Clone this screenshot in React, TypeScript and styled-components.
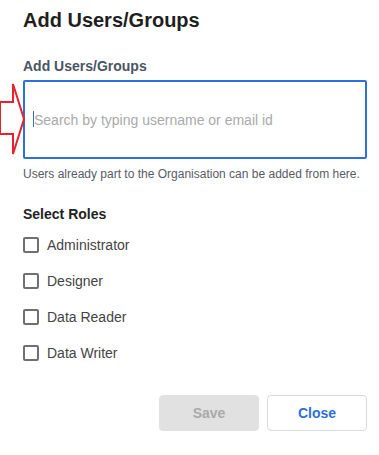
import React from "react";
import styled, { createGlobalStyle } from "styled-components";

const GlobalStyle = createGlobalStyle`
  html, body {
    margin: 0;
    padding: 0;
    background: #ffffff;
  }
  body {
    font-family: "Liberation Sans", Arial, sans-serif;
  }
`;

const Dialog = styled.div`
  width: 379px;
  box-sizing: border-box;
  padding: 8px 12px 0 23px;
  display: flex;
  flex-direction: column;
`;

const Title = styled.h2`
  margin: 0;
  font-size: 20px;
  line-height: 24px;
  font-weight: bold;
  color: #1f1f1f;
`;

const FieldLabel = styled.label`
  margin-top: 24px;
  font-size: 14px;
  line-height: 20px;
  font-weight: bold;
  color: #4a5563;
`;

const InputWrap = styled.div`
  position: relative;
  margin-top: 4px;
`;

const SearchInput = styled.input`
  display: block;
  width: 100%;
  height: 79px;
  box-sizing: border-box;
  border: 2px solid #2f6fdb;
  border-radius: 2px;
  padding: 0 9px;
  font-family: inherit;
  font-size: 14px;
  color: #333;
  caret-color: #2f6fdb;
  outline: none;

  &::placeholder {
    color: #aaaaaa;
  }
`;

const Caret = styled.span`
  position: absolute;
  left: 10px;
  top: 31px;
  width: 1px;
  height: 16px;
  background: #2f6fdb;
  pointer-events: none;
`;

const Pointer = styled.svg`
  position: absolute;
  left: -23px;
  top: 2px;
  pointer-events: none;
`;

const Hint = styled.p`
  margin: 7px 0 0;
  font-size: 12px;
  line-height: 16px;
  color: #555c66;
`;

const SectionTitle = styled.div`
  margin-top: 22px;
  margin-bottom: 3px;
  font-size: 14px;
  line-height: 20px;
  font-weight: bold;
  color: #222;
`;

const RoleRow = styled.label`
  display: flex;
  align-items: center;
  gap: 8px;
  height: 36px;
  font-size: 14px;
  color: #444;
  cursor: pointer;
`;

const Box = styled.span`
  width: 16px;
  height: 16px;
  box-sizing: border-box;
  border: 2px solid #707070;
  border-radius: 2px;
  flex-shrink: 0;
`;

const Actions = styled.div`
  margin-top: 24px;
  display: flex;
  justify-content: flex-end;
  gap: 8px;
`;

const Button = styled.button<{ $variant: "disabled" | "outline" }>`
  width: 100px;
  height: 36px;
  box-sizing: border-box;
  border-radius: 4px;
  font-family: inherit;
  font-size: 14px;
  font-weight: bold;
  cursor: pointer;
  border: 1px solid ${(p) => (p.$variant === "disabled" ? "#e1e1e1" : "#d9d9d9")};
  background: ${(p) => (p.$variant === "disabled" ? "#e1e1e1" : "#ffffff")};
  color: ${(p) => (p.$variant === "disabled" ? "#a9a9a9" : "#2f6fdb")};
`;

const roles = ["Administrator", "Designer", "Data Reader", "Data Writer"];

export default function App() {
  return (
    <>
      <GlobalStyle />
      <Dialog>
        <Title>Add Users/Groups</Title>
        <FieldLabel>Add Users/Groups</FieldLabel>
        <InputWrap>
          <SearchInput placeholder="Search by typing username or email id" />
          <Caret />
          <Pointer width="27" height="74" viewBox="0 0 27 74">
            <polygon
              points="0,20 13,20 13,2 24,37 13,72 13,52 0,52"
              fill="none"
              stroke="#e8212a"
              strokeWidth="2"
              strokeLinejoin="miter"
            />
          </Pointer>
        </InputWrap>
        <Hint>Users already part to the Organisation can be added from here.</Hint>
        <SectionTitle>Select Roles</SectionTitle>
        {roles.map((role) => (
          <RoleRow key={role}>
            <Box />
            {role}
          </RoleRow>
        ))}
        <Actions>
          <Button $variant="disabled" disabled>
            Save
          </Button>
          <Button $variant="outline">Close</Button>
        </Actions>
      </Dialog>
    </>
  );
}
